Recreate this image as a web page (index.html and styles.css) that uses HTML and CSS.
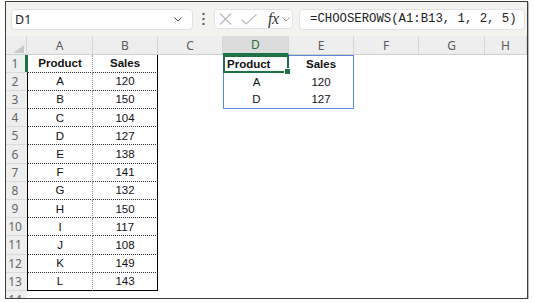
FILE: index.html
```html
<!DOCTYPE html>
<html>
<head>
  <title>CHOOSEROWS</title>
  <link rel="stylesheet" href="styles.css">
</head>
<body>
  <div class="frame">
    <!-- formula bar -->
    <div class="formula-bar">
      <div class="name-box">
        <span>D1</span>
        <svg width="8" height="5" viewBox="0 0 8 5"><polyline points="0.5,0.5 4,4 7.5,0.5" fill="none" stroke="#444" stroke-width="1"/></svg>
      </div>
      <svg class="dots" width="3" height="12" viewBox="0 0 3 12">
        <rect x="0.5" y="0" width="2" height="2" fill="#555"/>
        <rect x="0.5" y="5" width="2" height="2" fill="#555"/>
        <rect x="0.5" y="10" width="2" height="2" fill="#555"/>
      </svg>
      <div class="fx-box">
        <svg width="13" height="12" viewBox="0 0 13 12"><path d="M1 0.5 L12 11.5 M12 0.5 L1 11.5" stroke="#b8b8b8" stroke-width="1.1" fill="none"/></svg>
        <svg class="check" width="16" height="11" viewBox="0 0 16 11"><polyline points="0.5,5.5 5,10 15.5,0.5" fill="none" stroke="#b8b8b8" stroke-width="1.1"/></svg>
        <span class="fx">fx</span>
        <svg width="8" height="5" viewBox="0 0 8 5"><polyline points="0.5,0.5 4,4 7.5,0.5" fill="none" stroke="#999" stroke-width="1"/></svg>
      </div>
      <div class="formula">=CHOOSEROWS(A1:B13, 1, 2, 5)</div>
    </div>

    <!-- sheet -->
    <div class="sheet">
      <div class="row head">
        <div class="corner"><svg width="11" height="8" viewBox="0 0 11 8"><polygon points="11,0 11,8 0,8" fill="#c9c9c9"/></svg></div>
        <div class="ch">A</div><div class="ch">B</div><div class="ch">C</div><div class="ch sel">D</div>
        <div class="ch">E</div><div class="ch">F</div><div class="ch">G</div><div class="ch">H</div>
      </div>
      <div class="row">
        <div class="rh sel">1</div><div class="c t ta first b">Product</div><div class="c t tb b">Sales</div><div class="c"></div>
        <div class="c active b">Product<span class="handle"></span></div><div class="c spr spt b">Sales</div><div class="c"></div><div class="c"></div><div class="c"></div>
      </div>
      <div class="row">
        <div class="rh">2</div><div class="c t ta">A</div><div class="c t tb">120</div><div class="c"></div>
        <div class="c spl">A</div><div class="c spr">120</div><div class="c"></div><div class="c"></div><div class="c"></div>
      </div>
      <div class="row">
        <div class="rh">3</div><div class="c t ta">B</div><div class="c t tb">150</div><div class="c"></div>
        <div class="c spl spb">D</div><div class="c spr spb">127</div><div class="c"></div><div class="c"></div><div class="c"></div>
      </div>
      <div class="row">
        <div class="rh">4</div><div class="c t ta">C</div><div class="c t tb">104</div><div class="c"></div>
        <div class="c"></div><div class="c"></div><div class="c"></div><div class="c"></div><div class="c"></div>
      </div>
      <div class="row">
        <div class="rh">5</div><div class="c t ta">D</div><div class="c t tb">127</div><div class="c"></div>
        <div class="c"></div><div class="c"></div><div class="c"></div><div class="c"></div><div class="c"></div>
      </div>
      <div class="row">
        <div class="rh">6</div><div class="c t ta">E</div><div class="c t tb">138</div><div class="c"></div>
        <div class="c"></div><div class="c"></div><div class="c"></div><div class="c"></div><div class="c"></div>
      </div>
      <div class="row">
        <div class="rh">7</div><div class="c t ta">F</div><div class="c t tb">141</div><div class="c"></div>
        <div class="c"></div><div class="c"></div><div class="c"></div><div class="c"></div><div class="c"></div>
      </div>
      <div class="row">
        <div class="rh">8</div><div class="c t ta">G</div><div class="c t tb">132</div><div class="c"></div>
        <div class="c"></div><div class="c"></div><div class="c"></div><div class="c"></div><div class="c"></div>
      </div>
      <div class="row">
        <div class="rh">9</div><div class="c t ta">H</div><div class="c t tb">150</div><div class="c"></div>
        <div class="c"></div><div class="c"></div><div class="c"></div><div class="c"></div><div class="c"></div>
      </div>
      <div class="row">
        <div class="rh">10</div><div class="c t ta">I</div><div class="c t tb">117</div><div class="c"></div>
        <div class="c"></div><div class="c"></div><div class="c"></div><div class="c"></div><div class="c"></div>
      </div>
      <div class="row">
        <div class="rh">11</div><div class="c t ta">J</div><div class="c t tb">108</div><div class="c"></div>
        <div class="c"></div><div class="c"></div><div class="c"></div><div class="c"></div><div class="c"></div>
      </div>
      <div class="row">
        <div class="rh">12</div><div class="c t ta">K</div><div class="c t tb">149</div><div class="c"></div>
        <div class="c"></div><div class="c"></div><div class="c"></div><div class="c"></div><div class="c"></div>
      </div>
      <div class="row">
        <div class="rh">13</div><div class="c t ta last">L</div><div class="c t tb last">143</div><div class="c"></div>
        <div class="c"></div><div class="c"></div><div class="c"></div><div class="c"></div><div class="c"></div>
      </div>
      <div class="row">
        <div class="rh">14</div><div class="c"></div><div class="c"></div><div class="c"></div>
        <div class="c"></div><div class="c"></div><div class="c"></div><div class="c"></div><div class="c"></div>
      </div>
    </div>
  </div>
</body>
</html>
```

FILE: styles.css
```css
/* Page */
body {
  margin: 0;
  background: #fff;
  font-family: "Liberation Sans", Arial, sans-serif;
}

/* Window frame around the sheet */
.frame {
  margin: 1px 0 0 5px;
  width: 523px;
  height: 298px;
  box-sizing: border-box;
  border: 1px solid #3c3c3c;
  box-shadow: 1px 1px 0 #b8b8b8;
  overflow: hidden;
  background: #fff;
}

/* Formula bar */
.formula-bar {
  height: 34px;
  display: flex;
  align-items: center;
  padding: 0 2px 0 5px;
  background: #f3f4f0;
}

.name-box {
  width: 182px;
  height: 21px;
  box-sizing: border-box;
  display: flex;
  align-items: center;
  justify-content: space-between;
  padding: 0 10px 0 3px;
  background: #fff;
  border: 1px solid #e2e2e2;
  border-radius: 4px;
  font-family: "Noto Sans", sans-serif;
  font-size: 12.5px;
  color: #222;
}

.dots {
  margin: 0 9px 0 9px;
}

.fx-box {
  width: 79px;
  height: 20px;
  box-sizing: border-box;
  display: flex;
  align-items: center;
  padding-left: 4px;
  background: #fff;
  border: 1px solid #e2e2e2;
  border-radius: 4px;
}

.fx-box .check {
  margin-left: 9px;
}

.fx {
  font-family: "Liberation Serif", serif;
  font-style: italic;
  font-size: 16px;
  color: #333;
  margin: 0 3px 0 11px;
  letter-spacing: -0.5px;
}

.formula {
  flex: 1;
  height: 21px;
  box-sizing: border-box;
  margin-left: 6px;
  padding-left: 10px;
  display: flex;
  align-items: center;
  background: #fff;
  border: 1px solid #e2e2e2;
  border-radius: 4px;
  font-family: "Liberation Mono", monospace;
  font-size: 12.3px;
  color: #222;
}

/* Grid */
.row {
  display: grid;
  grid-template-columns: 21px 66px 65px 65px 66px 65px 65px 66px 1fr;
  height: 18.2px;
}

.row.head {
  height: 18.5px;
  background: #eeeeee;
}

.corner {
  display: flex;
  align-items: flex-end;
  justify-content: flex-end;
  padding: 0 2px 1px 0;
  border-right: 1px solid #d4d4d4;
  border-bottom: 1px solid #cfcfcf;
}

.ch {
  display: flex;
  align-items: center;
  justify-content: center;
  border-right: 1px solid #d6d6d6;
  border-bottom: 1px solid #cfcfcf;
  font-family: "Noto Sans", sans-serif;
  font-size: 12px;
  color: #5a5a5a;
}

.ch.sel {
  background: #dcdcdc;
  color: #1e7145;
  border-bottom: 2px solid #1e7145;
}

.corner, .ch, .rh, .c {
  box-sizing: border-box;
}

/* Row numbers */
.rh {
  display: flex;
  align-items: center;
  justify-content: center;
  padding-right: 3px;
  background: #eeeeee;
  border-bottom: 1px solid #dadada;
  font-family: "Noto Sans", sans-serif;
  font-size: 12px;
  color: #666;
}

.rh.sel {
  box-shadow: inset -2px 0 0 #1e7145;
}

/* Cells */
.c {
  position: relative;
  display: flex;
  align-items: center;
  justify-content: center;
  font-size: 11.5px;
  color: #111;
}

.b {
  font-weight: bold;
}

/* Source table A1:B13 */
.t {
  border-bottom: 1px dotted #333;
}

.ta {
  border-left: 1px solid #000;
  border-right: 1px dotted #999;
}

.ta.first {
  border-left-color: #1e7145;
}

.tb {
  border-right: 1px solid #000;
}

.t.last {
  border-bottom: 1px solid #000;
}

/* Spill range D1:E3 */
.spl {
  border-left: 1px solid #5a88d8;
}

.spr {
  border-right: 1px solid #5a88d8;
}

.spt {
  border-top: 1px solid #5a88d8;
}

.spb {
  border-bottom: 1px solid #5a88d8;
}

.active {
  justify-content: flex-start;
  padding-left: 2px;
  border: 2px solid #1e7145;
}

.handle {
  position: absolute;
  right: -4px;
  bottom: -4px;
  width: 5px;
  height: 5px;
  background: #1e7145;
  border: 1px solid #fff;
}
```
